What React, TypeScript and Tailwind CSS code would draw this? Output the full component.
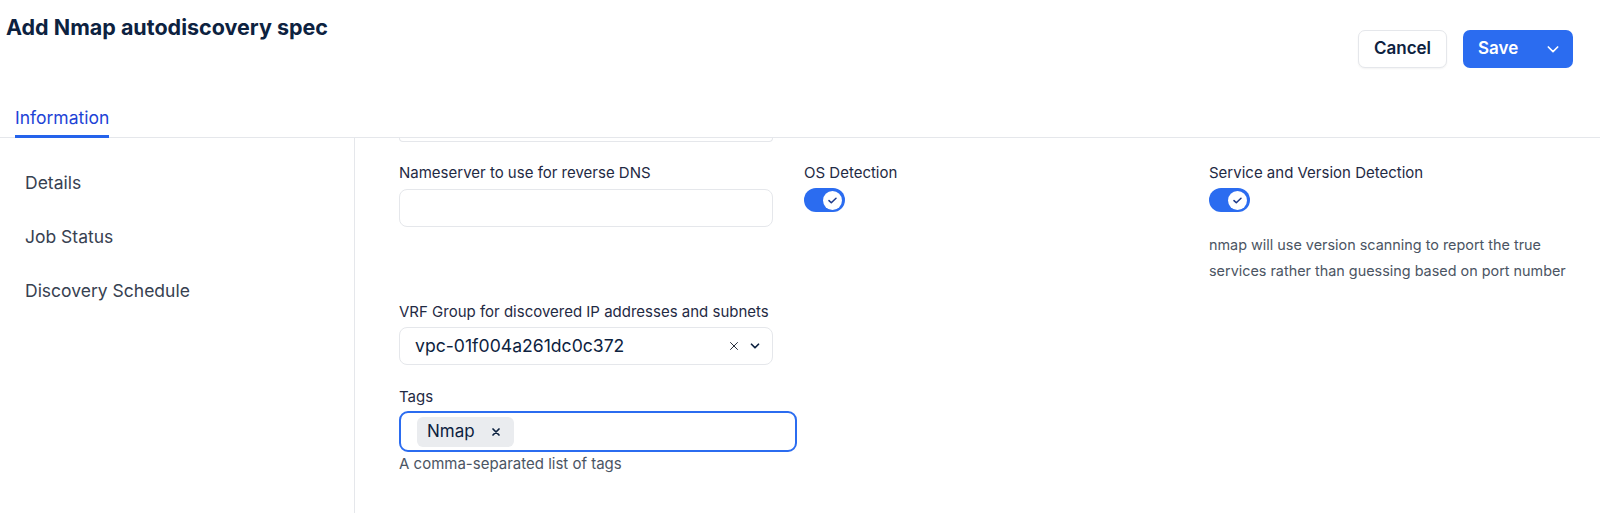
import React from "react";

function Toggle() {
  return (
    <div className="flex h-[24px] w-[41px] items-center justify-end rounded-full bg-[#2b6cf0] pr-[3px]">
      <div className="flex h-[19px] w-[19px] items-center justify-center rounded-full bg-white">
        <svg width="9" height="7" viewBox="0 0 9 7" fill="none">
          <path d="M1 3.6L3.3 5.8L8 1.2" stroke="#1e3a8a" strokeWidth="1.5" strokeLinecap="round" strokeLinejoin="round" />
        </svg>
      </div>
    </div>
  );
}

export default function App() {
  return (
    <div className="h-[513px] w-[1600px] overflow-hidden bg-white font-['Inter',sans-serif]">
      {/* Header */}
      <div className="flex h-[138px] flex-col justify-between border-b border-[#e5e7eb]">
        <div className="flex items-start justify-between">
          <h1 className="pl-[6px] pt-[12px] text-[21.5px] font-bold leading-[30px] text-[#0d2240]">
            Add Nmap autodiscovery spec
          </h1>
          <div className="mr-[27px] mt-[30px] flex gap-[16px]">
            <button className="h-[38px] w-[89px] rounded-[7px] border border-[#e5e7eb] bg-white text-[17px] font-semibold text-[#0d2240] shadow-[0_1px_2px_rgba(0,0,0,0.05)]">
              Cancel
            </button>
            <button className="flex h-[38px] w-[110px] items-center justify-between rounded-[7px] bg-[#2b6cf0] pl-[15px] pr-[12px] text-[17px] font-semibold text-white">
              <span>Save</span>
              <svg width="16" height="16" viewBox="0 0 24 24" fill="none" stroke="white" strokeWidth="2.5" strokeLinecap="round" strokeLinejoin="round">
                <path d="M5 9l7 7 7-7" />
              </svg>
            </button>
          </div>
        </div>
        <div className="ml-[15px] -mb-px">
          <div className="inline-block border-b-[3px] border-[#2563eb] pb-[5px] text-[17.5px] leading-[24px] text-[#1d43d6]">
            Information
          </div>
        </div>
      </div>

      {/* Body */}
      <div className="flex h-[375px]">
        <div className="flex w-[355px] shrink-0 flex-col gap-[30px] border-r border-[#e5e7eb] pl-[25px] pt-[33px] text-[17.5px] leading-[24px] text-[#374151]">
          <div>Details</div>
          <div>Job Status</div>
          <div>Discovery Schedule</div>
        </div>

        <div className="flex-1 pl-[44px]">
          <div className="h-[4px] w-[374px] rounded-b-[8px] border-x border-b border-[#e5e7eb]" />

          <div className="mt-[21px] grid grid-cols-[374px_374px_374px] gap-x-[31px] items-start">
            <div>
              <div className="text-[15px] leading-[20px] text-[#1f2a44]">Nameserver to use for reverse DNS</div>
              <div className="mt-[6px] h-[38px] w-[374px] rounded-[8px] border border-[#e5e7eb] bg-white" />
            </div>
            <div>
              <div className="text-[15px] leading-[20px] text-[#1f2a44]">OS Detection</div>
              <div className="mt-[5px]">
                <Toggle />
              </div>
            </div>
            <div>
              <div className="text-[15px] leading-[20px] text-[#1f2a44]">Service and Version Detection</div>
              <div className="mt-[5px]">
                <Toggle />
              </div>
              <p className="mt-[20px] text-[14.4px] leading-[26px] text-[#4b5563]">
                nmap will use version scanning to report the true services rather than guessing based on port number
              </p>
            </div>
          </div>

          <div className="mt-[18px] w-[374px]">
            <div className="text-[15px] leading-[20px] text-[#1f2a44]">VRF Group for discovered IP addresses and subnets</div>
            <div className="mt-[5px] flex h-[38px] items-center rounded-[8px] border border-[#e5e7eb] bg-white pl-[15px] pr-[10px]">
              <span className="flex-1 text-[17.6px] text-[#0d2240]">vpc-01f004a261dc0c372</span>
              <svg width="12" height="12" viewBox="0 0 24 24" fill="none" stroke="#111827" strokeWidth="1.8" strokeLinecap="round" className="mr-[8px]">
                <path d="M5 5l14 14M19 5L5 19" />
              </svg>
              <svg width="14" height="14" viewBox="0 0 24 24" fill="none" stroke="#0d2240" strokeWidth="3" strokeLinecap="round" strokeLinejoin="round">
                <path d="M6 9l6 6 6-6" />
              </svg>
            </div>
          </div>

          <div className="mt-[22px]">
            <div className="text-[15px] leading-[20px] text-[#1f2a44]">Tags</div>
            <div className="mt-[4px] flex h-[41px] w-[398px] items-center rounded-[9px] border-[2.5px] border-[#2b6cf0] bg-white pl-[16px]">
              <div className="flex h-[30px] w-[97px] items-center rounded-[6px] bg-[#eaecef] pl-[10px]">
                <span className="text-[17px] text-[#0d2240]">Nmap</span>
                <svg width="12" height="12" viewBox="0 0 24 24" fill="none" stroke="#0d2240" strokeWidth="3.5" strokeLinecap="round" className="ml-[15px]">
                  <path d="M6 6l12 12M18 6L6 18" />
                </svg>
              </div>
            </div>
            <div className="mt-[2px] text-[15px] leading-[20px] text-[#4b5563]">A comma-separated list of tags</div>
          </div>
        </div>
      </div>
    </div>
  );
}
